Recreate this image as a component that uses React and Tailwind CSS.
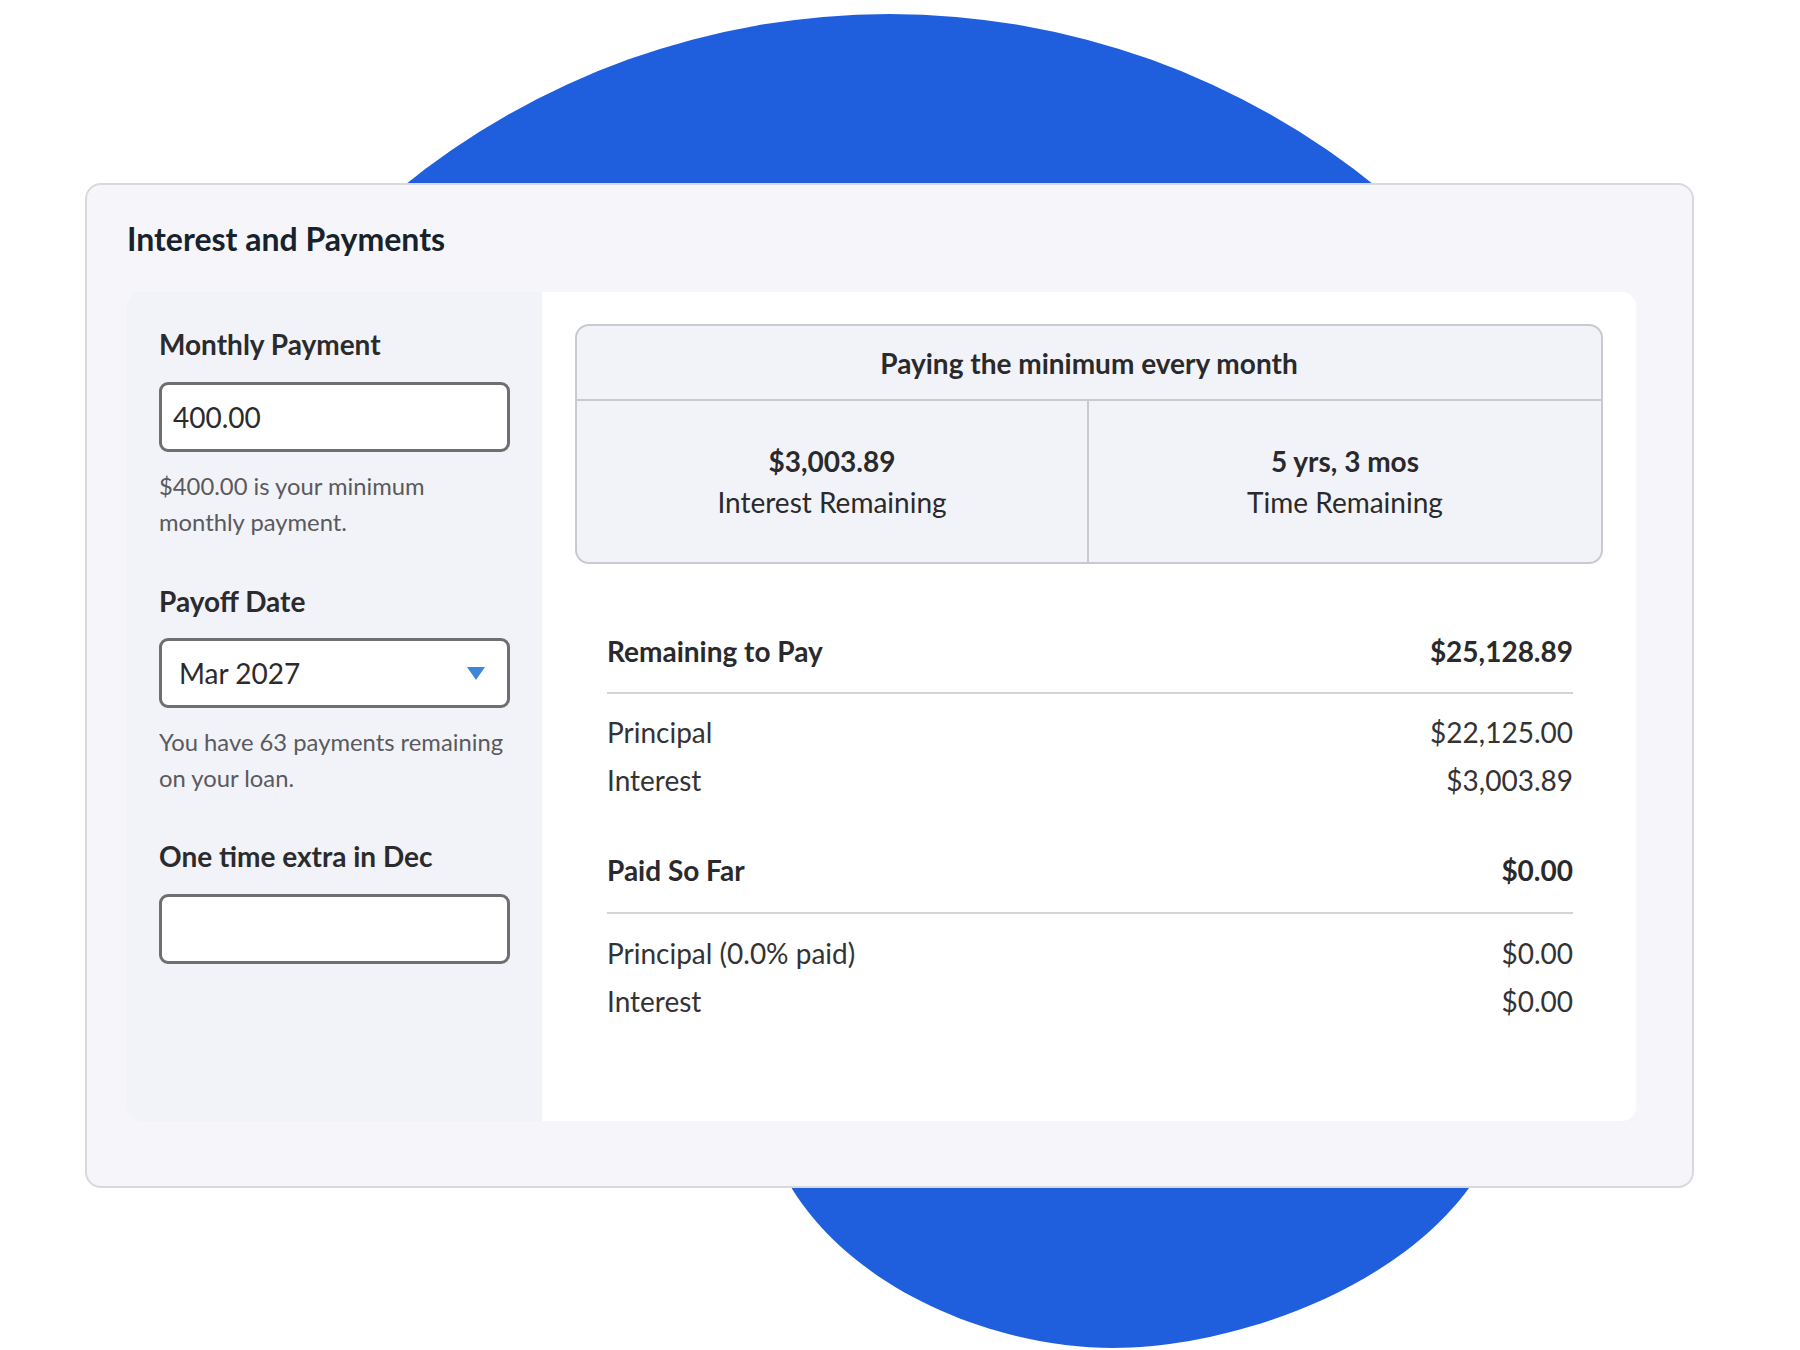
import React from "react";

function Field({ children, className = "" }) {
  return (
    <div
      className={
        "flex h-[70px] w-[351px] items-center rounded-[9px] border-[3px] border-[#6f6f72] bg-white " +
        className
      }
    >
      {children}
    </div>
  );
}

function Row({ label, value, bold }) {
  return (
    <div
      className={
        "flex justify-between text-[28px] " +
        (bold ? "font-bold leading-[34px] text-[#2a2a2c]" : "leading-[48px] text-[#333336]")
      }
    >
      <span>{label}</span>
      <span>{value}</span>
    </div>
  );
}

export default function App() {
  return (
    <div className="relative h-[1350px] w-[1800px] overflow-hidden bg-white font-['Lato',sans-serif]">
      {/* blue blob behind the card */}
      <svg
        className="absolute inset-0 h-full w-full"
        viewBox="0 0 1800 1350"
        xmlns="http://www.w3.org/2000/svg"
      >
        <path
          d="M398.5,190 A773,773 0 0 1 1380.5,190 L1478,1175 C1404,1290 1230,1348 1113,1348 C996,1348 846,1290 784,1175 Z"
          fill="#1f5fdd"
        />
      </svg>

      <div className="relative pl-[85px] pt-[183px]">
        <div className="h-[1005px] w-[1609px] rounded-[16px] border-2 border-[#d6dadd] bg-[#f6f6fa] pl-[40px] pr-[56px] pt-[35px]">
          <h1 className="text-[32px] font-bold leading-[37px] text-[#18222d]">
            Interest and Payments
          </h1>

          <div className="mt-[35px] flex h-[829px]">
            {/* left inputs */}
            <div className="w-[415px] rounded-l-[14px] bg-[#f2f3f8] pl-[32px] pt-[35px]">
              <div className="text-[28px] font-bold leading-[34px] text-[#2b2b2d]">
                Monthly Payment
              </div>
              <Field className="mt-[21px] pl-[11px]">
                <span className="text-[28px] text-[#2b2b2d]">400.00</span>
              </Field>
              <p className="mt-[16px] text-[23.8px] leading-[36px] text-[#5a5a5e]">
                $400.00 is your minimum
                <br />
                monthly payment.
              </p>

              <div className="mt-[44px] text-[28px] font-bold leading-[34px] text-[#2b2b2d]">
                Payoff Date
              </div>
              <Field className="mt-[20px] justify-between pl-[17px] pr-[22px]">
                <span className="text-[28px] text-[#2b2b2d]">Mar 2027</span>
                <svg width="18" height="13" viewBox="0 0 18 13">
                  <polygon points="0,0 18,0 9,13" fill="#3d86d8" />
                </svg>
              </Field>
              <p className="mt-[16px] text-[23.8px] leading-[36px] text-[#5a5a5e]">
                You have 63 payments remaining
                <br />
                on your loan.
              </p>

              <div className="mt-[43px] text-[28px] font-bold leading-[34px] text-[#2b2b2d]">
                One time extra in Dec
              </div>
              <Field className="mt-[21px]" />
            </div>

            {/* right summary */}
            <div className="flex-1 rounded-r-[14px] bg-white px-[33px] pt-[32px]">
              <div className="overflow-hidden rounded-[14px] border-2 border-[#c9cacf] bg-[#f2f3f8]">
                <div className="flex h-[75px] items-center justify-center border-b-2 border-[#c9cacf] text-[28px] font-bold text-[#2a2a2c]">
                  Paying the minimum every month
                </div>
                <div className="grid h-[161px] grid-cols-2">
                  <div className="flex flex-col items-center justify-center border-r-2 border-[#c9cacf] text-[28px] leading-[41px] text-[#2a2a2c]">
                    <span className="font-bold">$3,003.89</span>
                    <span>Interest Remaining</span>
                  </div>
                  <div className="flex flex-col items-center justify-center text-[28px] leading-[41px] text-[#2a2a2c]">
                    <span className="font-bold">5 yrs, 3 mos</span>
                    <span>Time Remaining</span>
                  </div>
                </div>
              </div>

              <div className="ml-[32px] mr-[30px] mt-[70px]">
                <Row label="Remaining to Pay" value="$25,128.89" bold />
                <div className="mt-[24px] h-[2px] bg-[#d3d4d8]" />
                <div className="mt-[14px]">
                  <Row label="Principal" value="$22,125.00" />
                  <Row label="Interest" value="$3,003.89" />
                </div>

                <div className="mt-[49px]">
                  <Row label="Paid So Far" value="$0.00" bold />
                </div>
                <div className="mt-[25px] h-[2px] bg-[#d3d4d8]" />
                <div className="mt-[15px]">
                  <Row label="Principal (0.0% paid)" value="$0.00" />
                  <Row label="Interest" value="$0.00" />
                </div>
              </div>
            </div>
          </div>
        </div>
      </div>
    </div>
  );
}
